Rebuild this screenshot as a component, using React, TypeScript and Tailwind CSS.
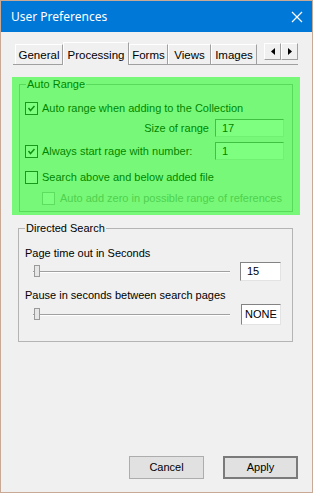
import React from "react";

const Check = ({ on, disabled }: { on?: boolean; disabled?: boolean }) => (
    <span
        className={`flex h-[13px] w-[13px] shrink-0 items-center justify-center border bg-white ${disabled ? "border-[#bcbcbc]" : "border-[#333333]"}`}
    >
        {on && (
            <svg width="9" height="9" viewBox="0 0 9 9">
                <path d="M1.5 4 L3.5 6.5 L7.5 2" stroke="#222" strokeWidth="1.5" fill="none" />
            </svg>
        )}
    </span>
);

const Field = ({ value, className }: { value: string; className: string }) => (
    <div
        className={`flex items-center border border-t-[#838383] border-l-[#838383] border-b-[#e3e3e3] border-r-[#e3e3e3] bg-white pl-[6px] ${className}`}
    >
        {value}
    </div>
);

const Slider = () => (
    <div className="relative h-[19px] w-[197px]">
        <div className="absolute left-0 right-0 top-[9px] h-[2px] border-t border-t-[#a0a0a0] border-b border-b-white" />
        <div className="absolute left-[1px] top-[3px] h-[12px] w-[6px] border border-[#9a9a9a] bg-[#e6e6e6]" />
    </div>
);

const tabs = ["General", "Processing", "Forms", "Views", "Images"];
const tabWidths = ["w-[48px]", "w-[66px]", "w-[39px]", "w-[43px]", "w-[46px]"];

const App: React.FC = () => {
    return (
        <div
            className="flex h-[493px] w-[313px] flex-col border border-[#c7a995] bg-[#f0f0f0] text-[11px] text-black"
            style={{ fontFamily: '"Liberation Sans", Arial, sans-serif' }}
        >
            {/* Title bar */}
            <div className="flex h-[31px] shrink-0 items-center justify-between bg-[#0078d7] pl-[10px] pr-[9px] text-white">
                <span className="text-[12px]" style={{ fontFamily: '"Noto Sans", sans-serif' }}>
                    User Preferences
                </span>
                <svg width="12" height="12" viewBox="0 0 12 12">
                    <path d="M1 1 L11 11 M11 1 L1 11" stroke="white" strokeWidth="1.2" />
                </svg>
            </div>

            {/* Tabs */}
            <div className="relative ml-[12px] mr-[14px] mt-[11px] flex h-[22px] items-end border-b border-b-[#a0a0a0] pl-[2px]">
                {tabs.map((t, i) =>
                    i === 1 ? (
                        <div
                            key={t}
                            className={`${tabWidths[i]} relative z-10 -mb-[1px] flex h-[23px] items-start justify-center border-l border-t border-r border-l-white border-t-white border-r-[#a0a0a0] bg-[#f0f0f0] pt-[4px] text-[11.5px]`}
                        >
                            {t}
                        </div>
                    ) : (
                        <div
                            key={t}
                            className={`${tabWidths[i]} flex h-[20px] items-center justify-center border-l border-t border-r border-l-white border-t-white border-r-[#a0a0a0] pt-[2px] text-[11.5px]`}
                        >
                            {t}
                        </div>
                    )
                )}
                <div className="mb-[4px] ml-auto flex h-[17px]">
                    <div className="flex w-[17px] items-center justify-center border border-t-white border-l-white border-b-[#a0a0a0] border-r-[#a0a0a0]">
                        <svg width="4" height="7" viewBox="0 0 4 7"><path d="M4 0 L0 3.5 L4 7 Z" fill="#000" /></svg>
                    </div>
                    <div className="flex w-[17px] items-center justify-center border border-t-white border-l-white border-b-[#a0a0a0] border-r-[#a0a0a0]">
                        <svg width="4" height="7" viewBox="0 0 4 7"><path d="M0 0 L4 3.5 L0 7 Z" fill="#000" /></svg>
                    </div>
                </div>
            </div>

            {/* Auto Range (highlighted) */}
            <div className="relative ml-[11px] mt-[12px] w-[288px] px-[7px] pb-[3px] pt-[1px]">
                <fieldset className="border border-[#b4b4b4] pb-[5px] pl-[5px] pr-[8px]">
                    <legend className="ml-[1px] px-[1px] leading-[13px]">Auto Range</legend>
                    <div className="mt-[9px] flex h-[16px] items-center gap-[4px]">
                        <Check on />
                        <span>Auto range when adding to the Collection</span>
                    </div>
                    <div className="mt-[3px] flex h-[18px] items-center justify-end gap-[6px]">
                        <span>Size of range</span>
                        <Field value="17" className="h-[18px] w-[69px]" />
                    </div>
                    <div className="mt-[5px] flex h-[18px] items-center gap-[4px]">
                        <Check on />
                        <span className="flex-1">Always start rage with number:</span>
                        <Field value="1" className="h-[18px] w-[69px]" />
                    </div>
                    <div className="mt-[9px] flex h-[16px] items-center gap-[4px]">
                        <Check />
                        <span>Search above and below added file</span>
                    </div>
                    <div className="mt-[5px] flex h-[16px] items-center gap-[5px] pl-[17px] text-[#a0a0a0]">
                        <Check disabled />
                        <span>Auto add zero in possible range of references</span>
                    </div>
                </fieldset>
                <div className="pointer-events-none absolute inset-0 bg-[#00ff00]/50" />
            </div>

            {/* Directed Search */}
            <fieldset className="ml-[17px] mt-[7px] w-[275px] border border-[#b4b4b4] pb-[16px] pl-[6px] pr-[11px]">
                <legend className="ml-0 px-[1px] leading-[13px]">Directed Search</legend>
                <div className="mt-[11px] flex h-[14px] items-center">Page time out in Seconds</div>
                <div className="mt-[2px] flex items-center justify-between pl-[8px]">
                    <Slider />
                    <Field value="15" className="h-[19px] w-[41px]" />
                </div>
                <div className="mt-[7px] flex h-[14px] items-center">Pause in seconds between search pages</div>
                <div className="mt-[2px] flex items-center justify-between pl-[8px]">
                    <Slider />
                    <Field value="NONE" className="h-[21px] w-[40px] !pl-[3px]" />
                </div>
            </fieldset>

            {/* Buttons */}
            <div className="mt-auto flex justify-end gap-[19px] pb-[13px] pr-[14px]">
                <button className="h-[23px] w-[75px] border border-[#adadad] bg-[#e1e1e1] text-[11px]">Cancel</button>
                <button className="h-[23px] w-[75px] border-2 border-[#7a7a7a] bg-[#e1e1e1] text-[11px]">Apply</button>
            </div>
        </div>
    );
};

export default App;
